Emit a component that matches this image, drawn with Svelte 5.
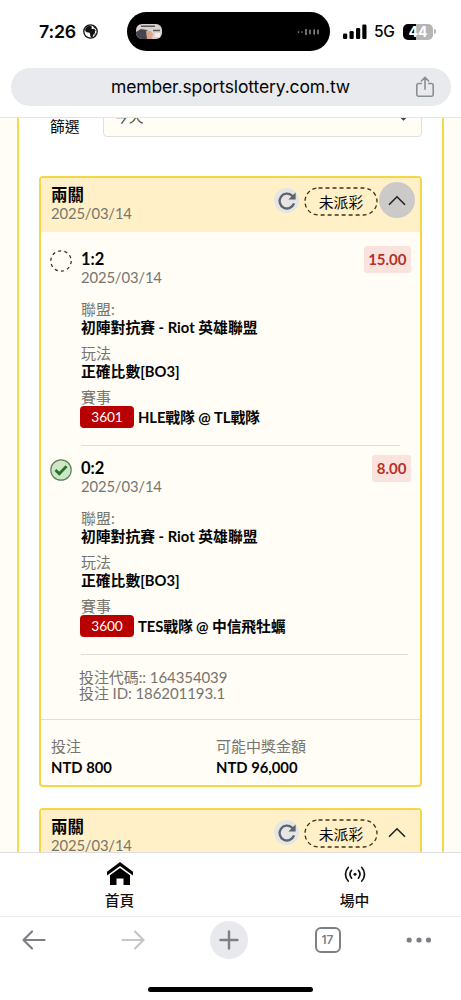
<!--
  Betting history screen: mobile browser chrome around a list of bet slips.
-->
<script lang="ts">
  interface Leg {
    pick: string;
    date: string;
    odds: string;
    won: boolean;
    league: string;
    market: string;
    code: string;
    match: string;
  }

  const legs: Leg[] = [
    {
      pick: '1:2',
      date: '2025/03/14',
      odds: '15.00',
      won: false,
      league: '初陣對抗賽 - Riot 英雄聯盟',
      market: '正確比數[BO3]',
      code: '3601',
      match: 'HLE戰隊 @ TL戰隊',
    },
    {
      pick: '0:2',
      date: '2025/03/14',
      odds: '8.00',
      won: true,
      league: '初陣對抗賽 - Riot 英雄聯盟',
      market: '正確比數[BO3]',
      code: '3600',
      match: 'TES戰隊 @ 中信飛牡蠣',
    },
  ];
</script>

{#snippet slipHead(pressed: boolean)}
  <header class="slip-head">
    <div class="slip-name">
      <h2>兩關</h2>
      <span class="muted date">2025/03/14</span>
    </div>
    <button class="refresh" aria-label="refresh">
      <svg width="20" height="20" viewBox="0 0 20 20" fill="none">
        <path d="M17 12.4A7.4 7.4 0 1 1 15 4.600L16.600 6.300" stroke="#5d646d" stroke-width="2.300" />
        <path d="M18.600 1.400v7.200h-7.200z" fill="#5d646d" />
      </svg>
    </button>
    <span class="state">
      <svg width="74" height="29" viewBox="0 0 74 29" fill="none">
        <rect x="1" y="1" width="72" height="27" rx="13.5" stroke="#3b3215" stroke-width="1.3" stroke-dasharray="4 3" />
      </svg>
      <span>未派彩</span>
    </span>
    <button class="toggle" class:pressed aria-label="toggle">
      <svg width="18" height="11" viewBox="0 0 18 11" fill="none">
        <path d="M1 9.8 9 1.8l8 8" stroke="#222" stroke-width="1.6" />
      </svg>
    </button>
  </header>
{/snippet}

<div class="screen">
  <div class="status">
    <span class="clock">7:26</span>
    <svg class="globe" width="15" height="15" viewBox="0 0 15 15">
      <circle cx="7.5" cy="7.5" r="6.7" fill="#fff" stroke="#111" stroke-width="1.3" />
      <path d="M2.200 5.200 4 2.600 7 1.800l2.200 1L8.200 4.300l1.200.6 1.700-.2 1.700 1.900-.9.900.1 1.500-1.700 1.800-.7 2.200-1.500.4-.9-1.900-.2-2.200-1-.9-2.400-.1L2.300 6.900z" fill="#111" />
      <path d="m10.600 1.900 2.600 2.500-.9.400-2-1.700zM11.600 10.200l1.200-.9-.4 1.900-.8.700z" fill="#111" />
    </svg>
    <div class="island">
      <svg width="26" height="15" viewBox="0 0 26 15">
        <rect width="26" height="15" rx="6" fill="#d9d2cf" />
        <path d="M0 8 5 5l6 1 2 3v6H6a6 6 0 0 1-6-6z" fill="#45454f" />
        <path d="M10 7h5l2 3-1 5h-5z" fill="#dba58f" />
        <path d="M5 2.2h14M17 6.5h7" stroke="#5c5558" stroke-width="1.4" />
        <path d="M19 9h5v4h-5z" fill="#f2ecea" />
      </svg>
      <svg width="23" height="8" viewBox="0 0 23 8" stroke="#8a8a8a" stroke-width="1.6" stroke-linecap="round">
        <path d="M1.5 4v.1M5 4v.1M9 1.600v4.800M13 2.4v3.2M17.2 2v4M21 2.4v3.2" />
      </svg>
    </div>
    <svg class="signal" width="24" height="16" viewBox="0 0 24 16">
      <rect y="9.5" width="4.2" height="5.5" rx="1.2" />
      <rect x="6.5" y="7" width="4.2" height="8" rx="1.2" />
      <rect x="13" y="4" width="4.2" height="11" rx="1.2" />
      <rect x="19.3" y="0.5" width="4.2" height="14.5" rx="1.2" />
    </svg>
    <span class="network">5G</span>
    <div class="battery"><span>44</span></div>
    <i class="nub"></i>
  </div>

  <div class="address">
    <div class="url">
      <span>member.sportslottery.com.tw</span>
      <svg width="20" height="22" viewBox="0 0 20 22" fill="none" stroke="#8a8f94" stroke-width="1.6" stroke-linecap="round" stroke-linejoin="round">
        <path d="M6.3 7.5H3.5a1.7 1.7 0 0 0-1.7 1.7v9.3a1.7 1.7 0 0 0 1.7 1.7h13a1.7 1.7 0 0 0 1.7-1.7V9.2a1.7 1.7 0 0 0-1.7-1.7h-2.8M10 13.2V1.8M6.4 5 10 1.4 13.6 5" />
      </svg>
    </div>
  </div>

  <main class="viewport">
    <div class="panel">
      <div class="filter">
        <span>篩選</span>
        <div class="select">
          <span>今天</span>
          <svg width="9" height="6" viewBox="0 0 9 6" fill="none">
            <path d="m1 1 3.5 3.4L8 1" stroke="#444" stroke-width="2" />
          </svg>
        </div>
      </div>

      <article class="slip">
        {@render slipHead(true)}
        {#each legs as leg}
          <section class="leg">
            <div class="mark">
              {#if leg.won}
                <svg width="22" height="22" viewBox="0 0 22 22" fill="none">
                  <circle cx="11" cy="11" r="10.2" fill="#cde6c4" stroke="#5f7f5a" stroke-width="1.2" />
                  <path d="m5.5 11 3.8 3.8 7.2-7.6" stroke="#26702a" stroke-width="2.7" />
                </svg>
              {:else}
                <svg width="22" height="22" viewBox="0 0 22 22" fill="none">
                  <circle cx="11" cy="11" r="10.2" stroke="#222" stroke-width="1.2" stroke-dasharray="3.2 3.2" />
                </svg>
              {/if}
            </div>
            <div class="info">
              <strong class="pick">{leg.pick}</strong>
              <span class="muted date">{leg.date}</span>
              <dl>
                <dt>聯盟:</dt>
                <dd>{leg.league}</dd>
                <dt>玩法</dt>
                <dd>{leg.market}</dd>
                <dt>賽事</dt>
                <dd class="match"><span class="code">{leg.code}</span>{leg.match}</dd>
              </dl>
            </div>
            <span class="odds">{leg.odds}</span>
          </section>
        {/each}
        <div class="ids">
          <span>投注代碼:: 164354039</span>
          <span>投注 ID: 186201193.1</span>
        </div>
        <footer class="totals">
          <div><span class="muted">投注</span><strong>NTD 800</strong></div>
          <div><span class="muted">可能中獎金額</span><strong>NTD 96,000</strong></div>
        </footer>
      </article>

      <article class="slip">
        {@render slipHead(false)}
      </article>
    </div>
  </main>

  <nav class="tabs">
    <a href="#home">
      <svg width="28" height="24" viewBox="0 0 28 24">
        <path d="M14 0 27 9.8v3.7L14 4 1 13.5V9.8z" />
        <path d="m14 6 10 7.2V23h-6.500v-6.500h-7V23H4v-9.800z" />
      </svg>
      <span>首頁</span>
    </a>
    <a href="#live">
      <svg width="22" height="24" viewBox="0 0 22 24" fill="none" stroke="#111" stroke-width="1.7" stroke-linecap="round">
        <path d="M4.200 5.500C.6 9.500.6 15 4.200 19M7.600 8.300c-2 2.400-2 5.500 0 7.900M17.800 5.500c3.600 4 3.600 9.500 0 13.500M14.400 8.300c2 2.400 2 5.500 0 7.900" />
        <circle cx="11" cy="12.200" r="1.500" fill="#111" stroke="none" />
      </svg>
      <span>場中</span>
    </a>
  </nav>

  <div class="toolbar">
    <svg class="back" width="24" height="20" viewBox="0 0 24 20" fill="none" stroke="#7c8085" stroke-width="2.200" stroke-linecap="round" stroke-linejoin="round">
      <path d="M22.500 10H1.500M10 1.500 1.500 10l8.500 8.500" />
    </svg>
    <svg width="24" height="20" viewBox="0 0 24 20" fill="none" stroke="#c6c6c6" stroke-width="2.200" stroke-linecap="round" stroke-linejoin="round">
      <path d="M1.500 10h21M14 1.500l8.500 8.500-8.500 8.500" />
    </svg>
    <button class="plus" aria-label="new tab">
      <svg width="20" height="20" viewBox="0 0 20 20" fill="none" stroke="#7c8085" stroke-width="2.400" stroke-linecap="round">
        <path d="M10 1.500v17M1.500 10h17" />
      </svg>
    </button>
    <span class="count">17</span>
    <svg width="26" height="6" viewBox="0 0 26 6" fill="#7c8085">
      <circle cx="3.200" cy="3" r="2.600" />
      <circle cx="13" cy="3" r="2.600" />
      <circle cx="22.500" cy="3" r="2.600" />
    </svg>
  </div>
  <div class="home-bar"></div>
</div>

<style>
  :global(body) {
    background: #fff;
  }
  .screen {
    display: flex;
    flex-direction: column;
    width: 461px;
    height: 1000px;
    overflow: hidden;
    background: #fff;
    color: #050505;
    font-family: Lato, 'Noto Sans CJK TC', sans-serif;
    font-size: 14.8px;
    line-height: 18px;
  }
  .screen * {
    box-sizing: border-box;
  }
  button {
    border: none;
    padding: 0;
    background: none;
  }
  h2, dl, dt, dd {
    margin: 0;
  }
  svg {
    display: block;
    flex: none;
  }

  /* browser chrome */
  .status {
    display: flex;
    align-items: center;
    height: 63px;
    padding-left: 39px;
    font-family: Inter, sans-serif;
  }
  .clock {
    width: 44px;
    font-size: 17.8px;
    font-weight: 600;
    letter-spacing: -0.2px;
  }
  .island {
    display: flex;
    align-items: center;
    justify-content: space-between;
    width: 203px;
    height: 39px;
    margin-left: 29px;
    padding: 0 10px 0 9px;
    border-radius: 20px;
    background: #000;
  }
  .signal {
    margin-left: 13px;
  }
  .network {
    width: 21px;
    margin-left: 7px;
    font-size: 15.5px;
    font-weight: 500;
    letter-spacing: -0.4px;
  }
  .battery {
    width: 30px;
    height: 16px;
    margin-left: 8px;
    border-radius: 5px;
    background: linear-gradient(90deg, #000 44%, #b5b5b5 44%);
    color: #fff;
    font-size: 14px;
    font-weight: 700;
    line-height: 16px;
    text-align: center;
  }
  .nub {
    width: 2px;
    height: 5px;
    margin-left: 1px;
    border-radius: 0 2px 2px 0;
    background: #b5b5b5;
  }
  .address {
    height: 54px;
    padding: 5px 10px 0 11px;
  }
  .url {
    display: flex;
    align-items: center;
    justify-content: flex-end;
    height: 38px;
    padding-right: 16px;
    border-radius: 19px;
    background: #e8eaed;
    font-family: Inter, sans-serif;
    font-size: 17.5px;
    letter-spacing: -0.12px;
  }
  .url span {
    flex: 1;
    padding-left: 35px;
    text-align: center;
  }

  /* page */
  .viewport {
    height: 735px;
    overflow: hidden;
    padding: 0 17px;
    border-top: 1px solid #e4e4e4;
    background: #fffdf5;
  }
  .panel {
    height: 800px;
    padding: 0 20px;
    border: solid #f5da4c;
    border-width: 0 2px;
    background: #fff;
  }
  .filter {
    display: flex;
    align-items: flex-end;
    height: 19px;
    padding-left: 11px;
  }
  .filter > span {
    width: 53px;
    padding-bottom: 2px;
  }
  .select {
    display: flex;
    flex: 1;
    align-items: center;
    justify-content: space-between;
    height: 43px;
    padding: 0 13px 0 10px;
    border: 1px solid #e2e0d8;
    border-radius: 4px;
    background: #fffdf5;
    color: #444;
  }
  .select svg {
    margin-top: 4px;
  }
  .slip {
    margin-top: 39px;
    border: 2px solid #f5d746;
    border-radius: 4px;
    background: #fffdf5;
  }
  .slip + .slip {
    margin-top: 21px;
  }
  .slip-head {
    display: flex;
    height: 54px;
    margin-bottom: 1px;
    padding: 4px 5px 0 10px;
    background: #fff0c8;
  }
  .slip-name {
    display: flex;
    flex: 1;
    flex-direction: column;
    padding-top: 4px;
  }
  h2 {
    font-size: 16.5px;
    font-weight: 700;
    line-height: 18px;
  }
  .muted {
    color: #77756f;
    font-size: 15px;
  }
  .muted.date {
    font-size: 14.8px;
    letter-spacing: -0.12px;
  }
  .refresh {
    display: grid;
    place-items: center;
    width: 25px;
    height: 25px;
    margin: 6px 5px 0 0;
    border-radius: 50%;
    background: #e4e5e4;
  }
  .state {
    display: grid;
    place-items: center;
    height: 29px;
    margin: 5px 1px 0 0;
  }
  .state > * {
    grid-area: 1 / 1;
  }
  .toggle {
    display: grid;
    place-items: center;
    width: 36px;
    height: 36px;
    border-radius: 50%;
  }
  .toggle.pressed {
    background: #cbcac9;
  }

  .leg {
    display: flex;
    align-items: flex-start;
    height: 209px;
    padding: 13px 9px 0 10px;
  }
  .mark {
    flex: none;
    width: 30px;
    padding-top: 4px;
    margin-left: -1px;
    margin-right: 1px;
  }
  .info {
    flex: 0 0 319px;
    height: 200px;
    margin-right: -60px;
    border-bottom: 1px solid #e0ded6;
  }
  .leg + .leg .info {
    flex-basis: 327px;
  }
  .pick {
    display: block;
    padding-top: 4px;
    font-size: 16.5px;
    line-height: 18px;
  }
  dl {
    padding-top: 14px;
  }
  dt {
    color: #77756f;
    font-size: 15px;
  }
  dd {
    margin-bottom: 8px;
    font-weight: 700;
  }
  .match {
    display: flex;
    align-items: center;
    gap: 4px;
    height: 22px;
    margin-bottom: 0;
    letter-spacing: -0.1px;
  }
  .code {
    width: 54px;
    height: 22px;
    margin-left: -1px;
    border-radius: 4px;
    background: #b90000;
    color: #fff;
    font-size: 13.7px;
    font-weight: 400;
    line-height: 22px;
    text-align: center;
  }
  .odds {
    height: 27px;
    margin-left: auto;
    padding: 0 4.5px;
    border-radius: 3px;
    background: #fbe3dd;
    color: #b2332d;
    font-size: 15px;
    font-weight: 700;
    line-height: 27px;
  }
  .ids {
    display: flex;
    flex-direction: column;
    height: 69px;
    padding: 18px 0 0 38px;
    border-bottom: 1px solid #e0ded6;
    color: #77756f;
    font-size: 15px;
    letter-spacing: -0.08px;
    line-height: 16px;
  }
  .totals {
    display: flex;
    height: 65px;
    padding: 17px 10px 0;
  }
  .totals div {
    display: flex;
    flex-direction: column;
    gap: 3px;
    width: 165px;
  }

  /* bottom navigation */
  .tabs {
    display: flex;
    height: 65px;
    padding: 9px 0 0 2px;
    border-top: 1px solid #dedede;
    border-bottom: 1px solid #ececec;
  }
  .tabs a {
    display: flex;
    flex: 0 0 235px;
    flex-direction: column;
    align-items: center;
    gap: 5px;
    color: #111;
    font-weight: 500;
    text-decoration: none;
  }
  .toolbar {
    display: flex;
    align-items: center;
    justify-content: space-between;
    height: 46px;
    padding: 0 29px 0 22px;
  }
  .back {
    margin-right: 9px;
  }
  .plus {
    display: grid;
    place-items: center;
    width: 38px;
    height: 38px;
    margin-right: 1px;
    border-radius: 50%;
    background: #e8e9ed;
  }
  .count {
    width: 26px;
    height: 26px;
    border: 2px solid #7c8085;
    border-radius: 6px;
    color: #7c8085;
    font: 600 12px/22px Inter, sans-serif;
    text-align: center;
  }
  .home-bar {
    width: 165px;
    height: 5px;
    margin: 24px auto 0;
    border-radius: 3px;
    background: #000;
  }
</style>
